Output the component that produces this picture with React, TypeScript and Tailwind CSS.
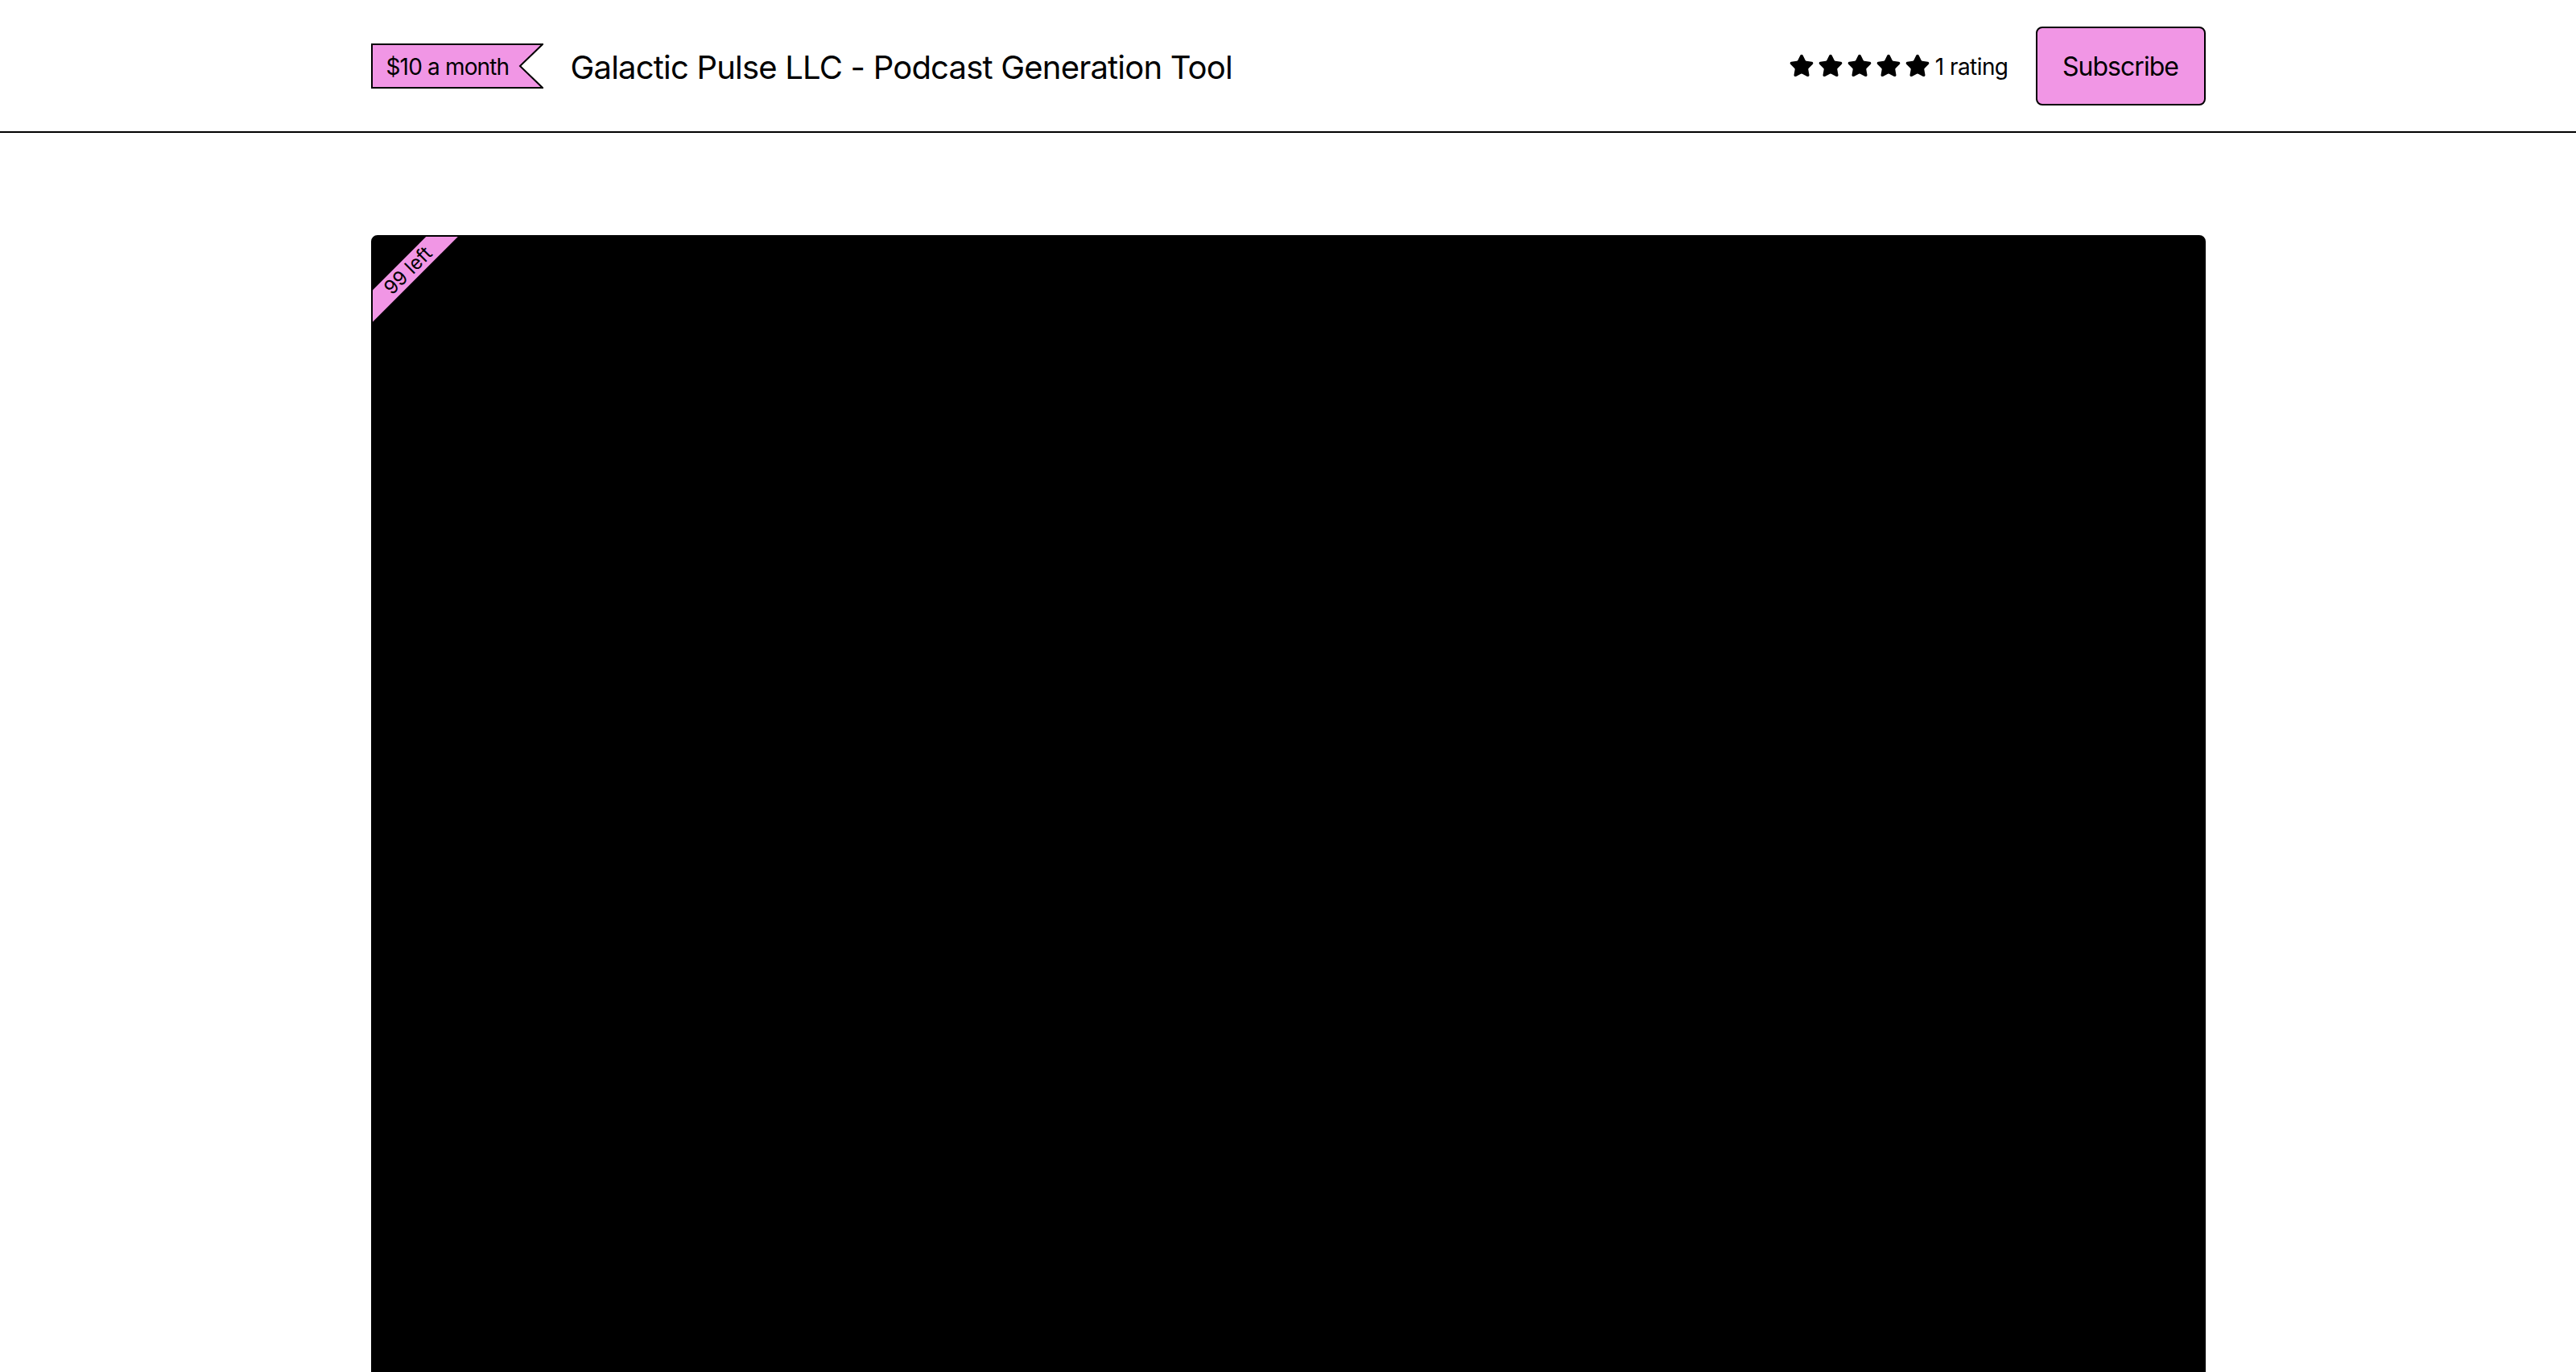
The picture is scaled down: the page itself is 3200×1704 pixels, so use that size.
import React from "react";

const STAR_PATH =
  "M11.525 2.295a.53.53 0 0 1 .95 0l2.31 4.679a2.123 2.123 0 0 0 1.595 1.16l5.166.756a.53.53 0 0 1 .294.904l-3.736 3.638a2.123 2.123 0 0 0-.611 1.878l.882 5.14a.53.53 0 0 1-.771.56l-4.618-2.428a2.122 2.122 0 0 0-1.973 0L6.396 21.01a.53.53 0 0 1-.77-.56l.881-5.139a2.122 2.122 0 0 0-.611-1.879L2.16 9.795a.53.53 0 0 1 .294-.906l5.165-.755a2.122 2.122 0 0 0 1.597-1.16z";

function Star() {
  return (
    <svg
      viewBox="0 0 24 24"
      className="h-[32px] w-[32px]"
      fill="currentColor"
      stroke="currentColor"
      strokeWidth={1.5}
      strokeLinejoin="round"
    >
      <path d={STAR_PATH} />
    </svg>
  );
}

function PriceTag({ label }: { label: string }) {
  return (
    <div className="relative flex h-[56px] w-[214px] items-center pl-[19px] pt-[3px]">
      <svg
        className="absolute inset-0 h-full w-full"
        viewBox="0 0 214 56"
        preserveAspectRatio="none"
      >
        <polygon
          points="1,1 213,1 185,28 213,55 1,55"
          fill="#f196e5"
          stroke="#000"
          strokeWidth={2}
        />
      </svg>
      <span className="relative text-[28px] leading-none tracking-[-0.03em]">
        {label}
      </span>
    </div>
  );
}

export default function App() {
  return (
    <div
      className="min-h-screen bg-white text-black"
      style={{ fontFamily: "Inter, 'Noto Sans', sans-serif" }}
    >
      <header className="border-b-2 border-black">
        <div className="mx-auto flex h-[163px] w-[2279px] items-center justify-between">
          <div className="flex items-center gap-[34px]">
            <PriceTag label="$10 a month" />
            <h1 className="pt-[4px] text-[40px] font-normal leading-none tracking-[-0.02em]">
              Galactic Pulse LLC - Podcast Generation Tool
            </h1>
          </div>
          <div className="flex items-center gap-[34px]">
            <div className="flex items-center gap-[6px] pt-[3px]">
              <div className="flex items-center gap-[4px] pb-[3px]">
                <Star />
                <Star />
                <Star />
                <Star />
                <Star />
              </div>
              <span className="text-[28px] leading-none tracking-[-0.02em]">
                1 rating
              </span>
            </div>
            <button className="h-[98px] w-[211px] rounded-[8px] border-2 border-black bg-[#f196e5] pt-[3px] text-center text-[32px] leading-none tracking-[-0.03em]">
              Subscribe
            </button>
          </div>
        </div>
      </header>

      <main className="mx-auto mt-[127px] w-[2279px]">
        <div className="relative h-[1600px] overflow-hidden rounded-t-[8px] border-2 border-black bg-black">
          <div className="absolute left-[-56px] top-[28px] flex h-[28px] w-[200px] -rotate-45 items-center justify-center bg-[#f196e5] text-[24px] leading-none text-black">
            99 left
          </div>
        </div>
      </main>
    </div>
  );
}
